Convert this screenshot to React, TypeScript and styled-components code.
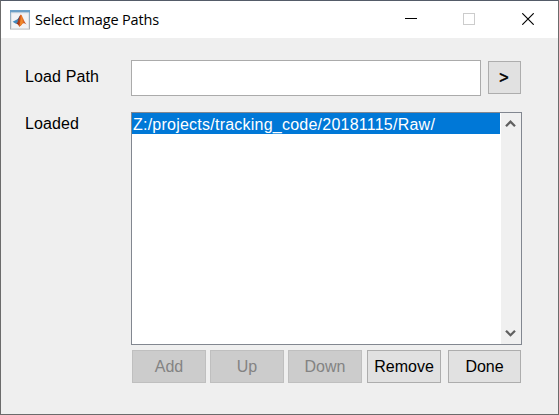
import React from "react";
import styled, { createGlobalStyle } from "styled-components";

const GlobalStyle = createGlobalStyle`
  * { box-sizing: border-box; }
  html, body { margin: 0; padding: 0; overflow: hidden; }
`;

const Window = styled.div`
  width: 559px;
  height: 415px;
  display: flex;
  flex-direction: column;
  background: #efefef;
  border: 1px solid #6b6b6b;
  border-top-color: #545b68;
  font-family: "Liberation Sans", Arial, sans-serif;
  font-size: 16px;
  line-height: 18px;
  color: #000;
`;

const TitleBar = styled.header`
  height: 37px;
  flex: none;
  display: flex;
  align-items: center;
  padding-left: 9px;
  background: #fff;
`;

const Title = styled.h1`
  margin: 0 auto 0 5px;
  font: 400 14.5px/20px "Open Sans", "Noto Sans", sans-serif;
  letter-spacing: -0.16px;
  white-space: nowrap;
`;

const CaptionButton = styled.button<{ $w: number }>`
  width: ${(p) => p.$w}px;
  height: 36px;
  align-self: flex-start;
  padding: 0;
  border: 0;
  background: transparent;
  display: flex;
  align-items: center;
  justify-content: center;
`;

const Body = styled.main`
  flex: 1;
  display: grid;
  grid-template-columns: 106px 391px;
  grid-template-rows: 36px 233px 33px;
  row-gap: 16px;
  padding: 22px 0 0 24px;
`;

const Label = styled.label<{ $top: number }>`
  padding-top: ${(p) => p.$top}px;
  letter-spacing: 0.12px;
`;

const PathRow = styled.div`
  display: flex;
  gap: 7px;
`;

const PathInput = styled.input`
  width: 350px;
  height: 36px;
  padding: 0 4px;
  border: 1px solid #ababab;
  background: #fff;
  font: inherit;
  outline: none;
`;

const PushButton = styled.button<{ $w: number }>`
  width: ${(p) => p.$w}px;
  height: 33px;
  padding: 1px 0 0;
  border: 1px solid #adadad;
  border-radius: 0;
  background: #e1e1e1;
  color: #000;
  font: inherit;
  white-space: nowrap;
  &:disabled {
    background: #cccccc;
    border-color: #bfbfbf;
    color: #838383;
  }
`;

const BrowseButton = styled(PushButton)`
  margin-top: 1px;
  padding: 0 1px 0 0;
  -webkit-text-stroke: 0.5px #000;
`;

const ListBox = styled.div`
  display: flex;
  gap: 1px;
  border: 1px solid #828790;
  background: #fff;
`;

const Items = styled.ul`
  width: 368px;
  margin: 0;
  padding: 0;
  list-style: none;
`;

const Item = styled.li`
  height: 21px;
  padding-left: 1px;
  line-height: 23px;
  letter-spacing: 0.235px;
  background: #0078d7;
  color: #fff;
  white-space: nowrap;
`;

const ScrollBar = styled.div`
  width: 20px;
  display: flex;
  flex-direction: column;
  justify-content: space-between;
  background: #f0f0f0;
  svg { display: block; }
`;

const ButtonRow = styled.div`
  grid-column: 2;
  display: flex;
  gap: 4px;
  padding-left: 1px;
  margin-top: -11px;
`;

const RemoveButton = styled(PushButton)`
  margin-left: 1px;
  margin-right: 3px;
`;

const AppIcon = () => (
  <svg width="20" height="20" viewBox="0 0 20 20">
    <defs>
      <linearGradient id="frame" x2="0" y2="1">
        <stop offset="0" stopColor="#8bb0cc" />
        <stop offset="1" stopColor="#a9adb1" />
      </linearGradient>
      <linearGradient id="peak" x1="0" x2="1">
        <stop offset="0" stopColor="#7d2418" />
        <stop offset="0.45" stopColor="#d9541a" />
        <stop offset="0.6" stopColor="#e9752a" />
        <stop offset="1" stopColor="#a8381c" />
      </linearGradient>
    </defs>
    <rect x="0.5" y="0.5" width="19" height="18.5" fill="#f0f1f3" stroke="url(#frame)" />
    <rect x="0" y="0" width="20" height="2.5" fill="#6c9fc6" />
    <rect x="1.5" y="3" width="17" height="15.5" fill="#f2f3f5" stroke="#d5d9dd" strokeWidth="0.6" />
    <path d="M2.6 11.8 6.5 9.8 8.4 11.4 6.3 14Z" fill="#4289bd" />
    <path d="M6.5 9.8C8.3 9.5 9 6.5 10.5 4.7L10 8.5 8.4 11.4Z" fill="#305d85" />
    <path d="M6.3 13.8C8.4 12.6 9.1 6 10.9 4.6 12.4 5.3 13.4 10.8 16.6 14.6 14.7 13 13.2 12.8 12 14.2 11 15.5 10.4 16.3 9.2 16.7 8.6 15.2 7.7 13.8 6.3 13.8Z" fill="url(#peak)" />
    <path d="M10.9 4.6C10.7 8 10.5 12.8 9.2 16.7 11 15.6 11.8 13.8 12.8 12.8 12 10 11.7 6 10.9 4.6Z" fill="#ee8a2c" />
  </svg>
);

const Chevron = ({ down = false }: { down?: boolean }) => (
  <svg width="20" height="22" viewBox="0 0 20 22">
    <path
      d={down ? "M5 8.8 9.5 13.2 14 8.8" : "M5 13.2 9.5 8.6 14 13.2"}
      fill="none"
      stroke="#606060"
      strokeWidth="2.3"
    />
  </svg>
);

export default function App() {
  return (
    <>
      <GlobalStyle />
      <Window>
        <TitleBar>
          <AppIcon />
          <Title>Select Image Paths</Title>
          <CaptionButton $w={58} aria-label="Minimize">
            <svg width="12" height="12" shapeRendering="crispEdges">
              <path d="M0 5.5H12" stroke="#000" />
            </svg>
          </CaptionButton>
          <CaptionButton $w={58} aria-label="Maximize" disabled>
            <svg width="12" height="12" shapeRendering="crispEdges">
              <rect x="0.5" y="0.5" width="11" height="11" fill="none" stroke="#ccc" />
            </svg>
          </CaptionButton>
          <CaptionButton $w={60} aria-label="Close">
            <svg width="12" height="12">
              <path d="M0.3 0.3 11.7 11.7M11.7 0.3 0.3 11.7" stroke="#000" strokeWidth="1.15" />
            </svg>
          </CaptionButton>
        </TitleBar>
        <Body>
          <Label $top={8} htmlFor="path">Load Path</Label>
          <PathRow>
            <PathInput id="path" />
            <BrowseButton $w={33}>&gt;</BrowseButton>
          </PathRow>
          <Label $top={3}>Loaded</Label>
          <ListBox>
            <Items>
              <Item>Z:/projects/tracking_code/20181115/Raw/</Item>
            </Items>
            <ScrollBar>
              <Chevron />
              <Chevron down />
            </ScrollBar>
          </ListBox>
          <ButtonRow>
            <PushButton $w={74} disabled>Add</PushButton>
            <PushButton $w={74} disabled>Up</PushButton>
            <PushButton $w={74} disabled>Down</PushButton>
            <RemoveButton $w={74}>Remove</RemoveButton>
            <PushButton $w={73}>Done</PushButton>
          </ButtonRow>
        </Body>
      </Window>
    </>
  );
}
